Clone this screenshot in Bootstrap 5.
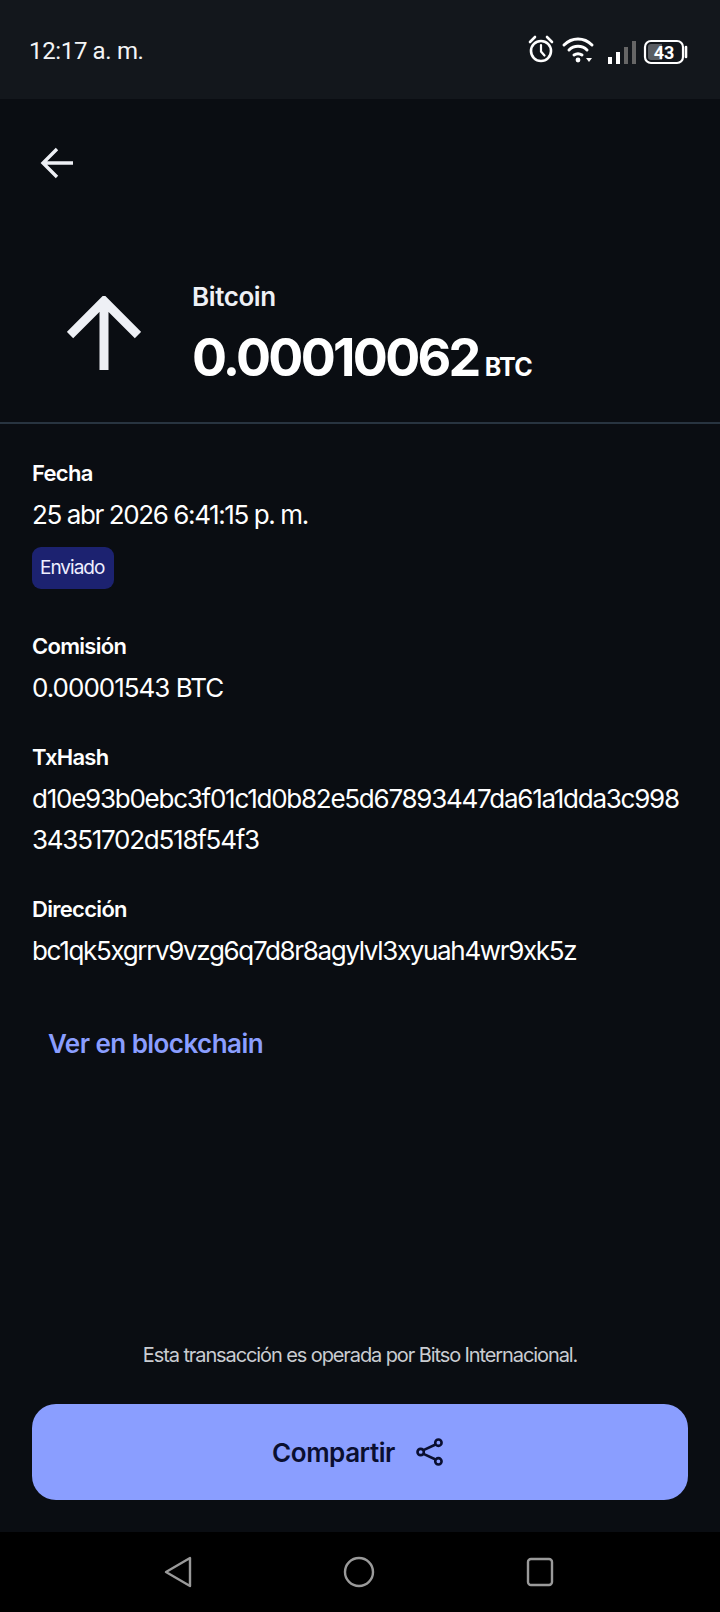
<!doctype html>
<html lang="es"><head><meta charset="utf-8"><title>Bitcoin</title>
<link rel="stylesheet" href="https://cdn.jsdelivr.net/npm/bootstrap@5.3.0/dist/css/bootstrap.min.css">
<style>
html,body{background:#0a0d12}
body{font-family:Inter,"Liberation Sans",sans-serif;color:#fff;width:720px;height:1612px;overflow:hidden}
.screen{height:1612px}
.statusbar{height:99px;background:#13171c;padding:0 28px 0 29px}
.clock{font-family:Roboto,sans-serif;font-size:24px;color:#f4f5f6;letter-spacing:-.35px;margin-top:2px}
.backrow{height:124px;padding:4px 0 0 40px}
.hero{height:201px;padding:59px 0 0 67px;border-bottom:2px solid #283440}
.hero-arrow{width:74px;margin:14px 51px 0 0}
.hero-name{font-size:26px;font-weight:600;color:#eef0f5;letter-spacing:-.4px;line-height:30px}
.hero-amt{font-size:52px;font-weight:700;letter-spacing:-2.7px;line-height:60px;margin-top:16px}
.hero-cur{font-size:25px;font-weight:700;letter-spacing:-.7px;margin-left:6px}
.details{padding:0 32px;margin-top:33px}
.dlabel{font-size:22px;font-weight:600;letter-spacing:-.7px;line-height:32px}
.dval{font-size:26px;font-weight:400;letter-spacing:-1.25px;line-height:41px;margin-top:5px;word-break:break-all}
.dval-date{letter-spacing:-1.4px}
.dval-fee{letter-spacing:-1px}
.dval-addr{letter-spacing:-1.34px}
.status-pill{display:block;width:fit-content;background:#1c2270;color:#eef;border-radius:9px;font-size:19px;letter-spacing:-1px;padding:0 10px 0 8px;line-height:42px;margin-top:12px}
.dblock{margin-bottom:33px}
.dblock-first{margin-bottom:41px}
.chainlink{color:#8a9eff;font-size:26px;font-weight:600;letter-spacing:-.55px;text-decoration:none;margin:20px 0 0 16px;display:inline-block}
.legal{font-size:20px;letter-spacing:-1.1px;color:#c9ccd1;text-align:center;line-height:28px}
.sharebtn{height:96px;background:#8a9eff;border:0;border-radius:24px;color:#0a0f30;font-size:26px;font-weight:600;letter-spacing:-.45px;margin:35px 32px 32px;width:656px;gap:21px;padding-right:16px}
.sharebtn:hover,.sharebtn:active{background:#8a9eff;color:#0a0f30}
.navkeys{height:80px;background:#000;padding:0 166px 0 164px}
</style></head><body>
<div class="screen d-flex flex-column">
<div class="statusbar d-flex justify-content-between align-items-center">
<span class="clock">12:17 a. m.</span>
<svg width="164" height="30" viewBox="0 0 164 30" fill="none">
<g stroke="#fff" stroke-width="2.6" stroke-linecap="round"><circle cx="13" cy="16" r="10"/><path d="M13 10v6.5l3.5 4" stroke-width="2.2"/><path d="M2 7l5-5M24 7l-5-5"/></g>
<g stroke="#fff" stroke-width="3" stroke-linecap="round" fill="none"><path d="M36 10c8-8 20-8 28 0M41 15c5-5 13-5 18 0M46 20c3-2 5-2 8 0"/></g><circle cx="50" cy="25" r="2.4" fill="#fff"/><path d="M58 23h6l-3 4z" fill="#fff"/>
<rect x="80" y="22" width="4" height="7" fill="#fff"/><rect x="88" y="17" width="4" height="12" fill="#fff"/><rect x="96" y="12" width="4" height="17" fill="#666"/><rect x="104" y="6" width="4" height="23" fill="#666"/>
<rect x="117" y="6" width="38" height="22" rx="6" stroke="#fff" stroke-width="2.2"/><path d="M123 9h11v16h-11a3 3 0 0 1-3-3V12a3 3 0 0 1 3-3z" fill="#5b5e63"/><path d="M158 12v10" stroke="#fff" stroke-width="2.6" stroke-linecap="round"/>
<text x="136" y="24" text-anchor="middle" font-family="Roboto,sans-serif" font-weight="700" font-size="18" fill="#fff">43</text>
</svg>
</div>
<div class="backrow d-flex align-items-center">
<svg width="33" height="32" viewBox="0 0 33 32" fill="none" stroke="#eef0f5" stroke-width="3.4"><path d="M17 2L3 16l14 14M3 16h30"/></svg>
</div>
<div class="hero d-flex align-items-start">
<svg class="hero-arrow" height="74" viewBox="0 0 74 74" fill="none" stroke="#eef0f5" stroke-width="9"><path d="M3 39L37 5l34 34M37 5v69"/></svg>
<div><div class="hero-name">Bitcoin</div><div class="hero-amt">0.00010062<span class="hero-cur">BTC</span></div></div>
</div>
<div class="details">
<div class="dblock-first"><div class="dlabel">Fecha</div><div class="dval dval-date">25 abr 2026 6:41:15 p. m.</div><span class="status-pill">Enviado</span></div>
<div class="dblock"><div class="dlabel">Comisión</div><div class="dval dval-fee">0.00001543 BTC</div></div>
<div class="dblock"><div class="dlabel">TxHash</div><div class="dval">d10e93b0ebc3f01c1d0b82e5d67893447da61a1dda3c99834351702d518f54f3</div></div>
<div class="dblock"><div class="dlabel">Dirección</div><div class="dval dval-addr">bc1qk5xgrrv9vzg6q7d8r8agylvl3xyuah4wr9xk5z</div></div>
<a class="chainlink" href="#">Ver en blockchain</a>
</div>
<div class="flex-grow-1"></div>
<div class="legal">Esta transacción es operada por Bitso Internacional.</div>
<button class="btn sharebtn d-flex align-items-center justify-content-center" type="button">Compartir
<svg width="28" height="30" viewBox="0 0 30 30" fill="none" stroke="#0a0f30" stroke-width="2.8"><circle cx="24" cy="5" r="3.4"/><circle cx="5" cy="15" r="3.4"/><circle cx="24" cy="25" r="3.4"/><path d="M8 13L21 7M8 17l13 6"/></svg></button>
<div class="navkeys d-flex justify-content-between align-items-center">
<svg width="28" height="32" viewBox="0 0 28 32" fill="none" stroke="#9a9a9a" stroke-width="2.4" stroke-linejoin="round"><path d="M26 2v28L2 16z"/></svg>
<svg width="32" height="32" viewBox="0 0 32 32" fill="none" stroke="#9a9a9a" stroke-width="2.4"><circle cx="16" cy="16" r="14"/></svg>
<svg width="28" height="30" viewBox="0 0 28 30" fill="none" stroke="#9a9a9a" stroke-width="2.4"><rect x="2" y="2" width="24" height="26" rx="3"/></svg>
</div>
</div>
</body></html>
